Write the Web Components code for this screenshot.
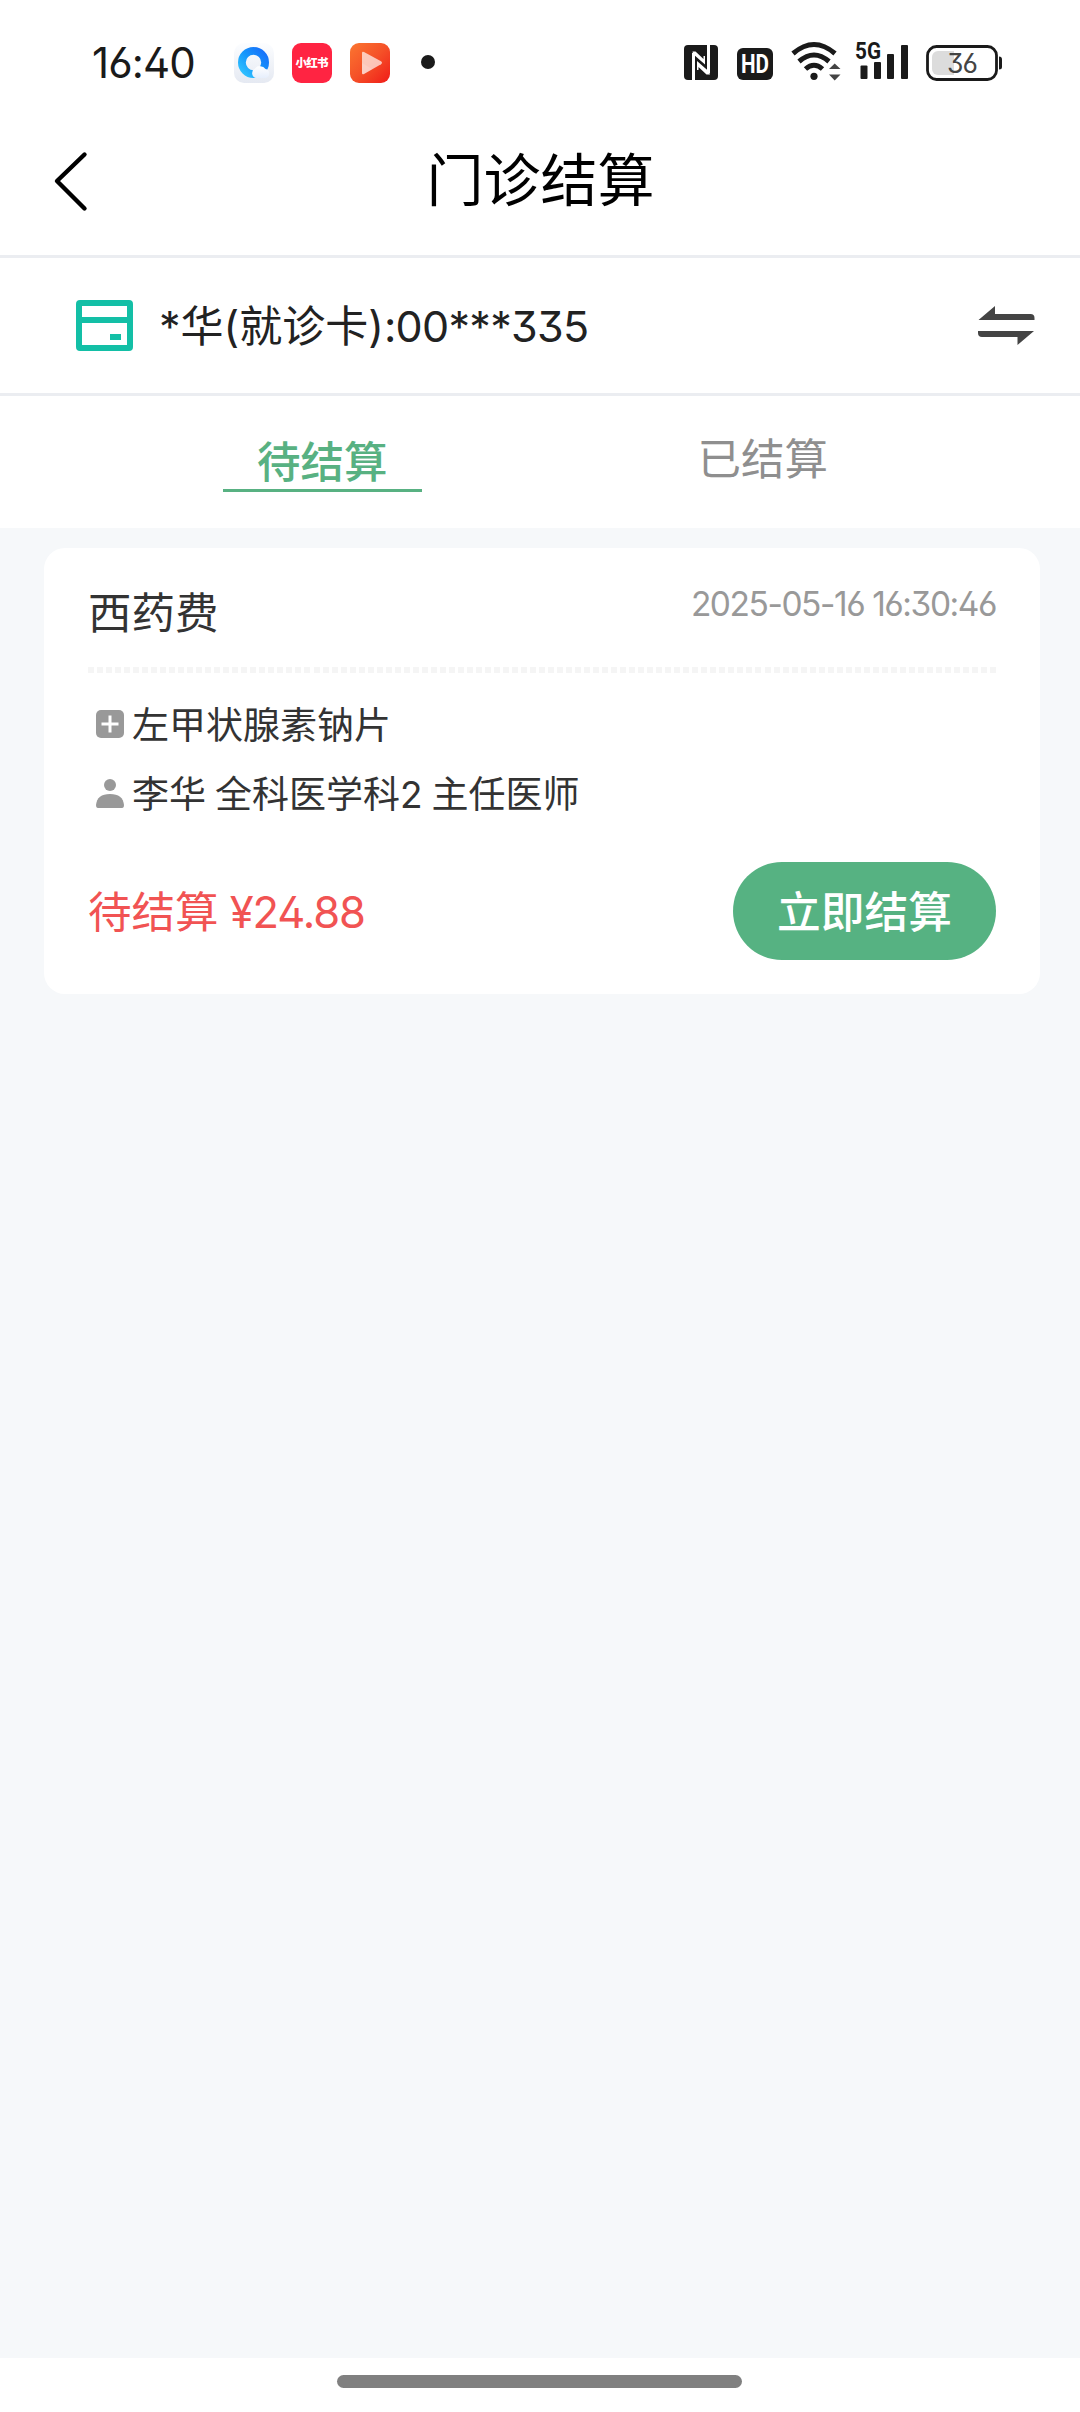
<!DOCTYPE html>
<html lang="zh-CN">
<head>
<meta charset="utf-8">
<title>门诊结算</title>
<style>
  body { margin: 0; background: #fff; font-family: Inter, "Noto Sans CJK SC", sans-serif; font-feature-settings: "ss01"; color: #222; }
</style>
</head>
<body>
<settlement-page></settlement-page>
<script>
const define = (name, html) => {
  const tpl = document.createElement('template');
  tpl.innerHTML = html;
  customElements.define(name, class extends HTMLElement {
    constructor() {
      super();
      this.attachShadow({ mode: 'open' }).append(tpl.content.cloneNode(true));
    }
  });
};

define('status-bar', `
<style>
  :host { display: flex; height: 125px; box-sizing: border-box; padding: 0 54px 0 92px; align-items: center; color: #1a1a1a; }
  svg { display: block; flex: none; }
  .time { font-size: 42px; line-height: 50px; width: 142px; letter-spacing: -.9px; white-space: nowrap; }
  .apps { display: flex; gap: 18px; align-items: center; flex: 1; }
  .sys { display: flex; align-items: center; }
</style>
<div class="time">16:40</div>
<div class="apps">
  <svg width="40" height="40" viewBox="0 0 40 40">
    <defs>
      <linearGradient id="q" x1="0" y1="1" x2="1" y2="0"><stop offset="0" stop-color="#31c3ff"/><stop offset=".5" stop-color="#1597fb"/><stop offset="1" stop-color="#176ffa"/></linearGradient>
      <linearGradient id="b" x1="0" y1="0" x2="0" y2="1"><stop offset="0" stop-color="#fcfdff"/><stop offset="1" stop-color="#e5e9f2"/></linearGradient>
      <linearGradient id="c" x1="0" y1="0" x2="0" y2="1"><stop offset="0" stop-color="#fff"/><stop offset="1" stop-color="#e6eefc"/></linearGradient>
    </defs>
    <rect width="40" height="40" rx="10" fill="url(#b)"/>
    <circle cx="19.5" cy="19.5" r="11.6" fill="none" stroke="url(#q)" stroke-width="7.8"/>
    <path d="M22 35a5 5 0 0 1-1-9.400A6.500 6.500 0 0 1 31.500 26 4.600 4.600 0 0 1 31.500 35z" fill="url(#c)"/>
  </svg>
  <svg width="40" height="40" viewBox="0 0 40 40">
    <rect width="40" height="40" rx="9" fill="#ff2442"/>
    <text x="20" y="24.300" text-anchor="middle" font-size="11.500" font-weight="900" fill="#fff" textLength="33">小红书</text>
  </svg>
  <svg width="40" height="40" viewBox="0 0 40 40">
    <defs><linearGradient id="o" x1="0" y1="0" x2="1" y2="1"><stop offset="0" stop-color="#fb7630"/><stop offset=".5" stop-color="#f55128"/><stop offset="1" stop-color="#f01b18"/></linearGradient></defs>
    <rect width="40" height="40" rx="9" fill="url(#o)"/>
    <path d="M14 9 31 18.300q2 1.500 0 3L14 31q-2 1-2-1V10q0-2 2-1z" fill="#fff" fill-opacity=".68"/>
    <path d="M12 20 22 26 14 31q-2 1-2-1z" fill="#fff" fill-opacity=".15"/>
  </svg>
  <svg width="54" height="40" viewBox="0 0 54 40"><circle cx="20" cy="19" r="7" fill="#1a1a1a"/></svg>
</div>
<div class="sys">
  <svg width="342" height="64" viewBox="0 -10 342 64" fill="#1a1a1a">
    <rect x="0" y="4" width="34" height="35" rx="4"/>
    <path d="M9.500 40V12M24.500 32V3" fill="none" stroke="#fff" stroke-width="3"/>
    <path d="M8.500 10.500H11.500L19.500 18V15H21V23.500L9 13zM26 33.500H22.500L14.500 26V29H13V20L25 30.500z" fill="#fff"/>
    <rect x="53" y="7" width="36" height="32" rx="6"/>
    <text x="71" y="32" text-anchor="middle" font-family="Roboto" font-weight="700" font-size="25" textLength="28" lengthAdjust="spacingAndGlyphs" fill="#fff">HD</text>
    <g fill="none" stroke="#1a1a1a" stroke-width="5">
      <path d="M109 12.500Q130 -5.500 151 12.500"/><path d="M115 20.500Q130 7.500 145 20.500"/><path d="M121.500 28Q130 20.500 138.500 28"/>
    </g>
    <circle cx="130" cy="35.300" r="3.600"/>
    <path d="M145 28 150.700 22.500 156.500 28zM145 33.500H156.500L150.700 39.500z" fill="#444"/>
    <text x="171" y="18.300" font-family="Roboto" font-weight="700" font-size="23" textLength="26" lengthAdjust="spacingAndGlyphs">5G</text>
    <rect x="176.500" y="24.500" width="7" height="13.500" rx="1"/><rect x="190" y="21" width="7" height="17" rx="1"/>
    <rect x="203" y="13" width="7" height="25" rx="1"/><rect x="217" y="4" width="7" height="34" rx="1"/>
    <rect x="243.500" y="5.500" width="69" height="33" rx="9" fill="none" stroke="#1a1a1a" stroke-width="2.800"/>
    <path d="M254 10H270V34H254a6 6 0 0 1-6-6V16a6 6 0 0 1 6-6z" fill="#dcdcdc"/>
    <path d="M315 15.500q3 0 3 3V26q0 2.500-3 2.500z"/>
    <text x="278.500" y="31.500" text-anchor="middle" font-size="26.500" fill="#444" textLength="31">36</text>
  </svg>
</div>`);

define('nav-header', `
<style>
  :host { display: grid; grid-template-columns: 120px 1fr 120px; align-items: center; height: 133px; box-sizing: border-box; border-bottom: 3px solid #ebedf1; color: #000; }
  svg { display: block; margin: -20px 0 0 50px; }
  h1 { margin: -19px 0 0 1px; font-size: 57px; line-height: 70px; font-weight: 400; text-align: center; }
</style>
<svg width="42" height="64" viewBox="0 0 42 64"><path d="M34.500 6.500 7 33 34.500 60.500" fill="none" stroke="#000" stroke-width="4.400" stroke-linecap="round" stroke-linejoin="round"/></svg>
<h1><slot></slot></h1>`);

define('patient-bar', `
<style>
  :host { display: flex; align-items: center; height: 138px; box-sizing: border-box; border-bottom: 3px solid #ebedf1; padding: 0 45px 0 76px; }
  svg { display: block; flex: none; }
  .name { flex: 1; margin-left: 26px; font-size: 43px; line-height: 60px; white-space: nowrap; }
  ::slotted(span) { letter-spacing: -.7px; }
</style>
<svg width="57" height="51" viewBox="0 0 57 51"><rect x="3" y="3" width="51" height="45" rx="1" fill="none" stroke="#13bfa6" stroke-width="6"/><path d="M3 20H54" stroke="#13bfa6" stroke-width="6"/><path d="M34 34H45V40H34z" fill="#13bfa6"/></svg>
<div class="name"><slot></slot></div>
<svg width="57" height="39" viewBox="0 0 57 39" fill="#444"><path d="M.5 14 17 0V8H52.500Q56.500 8 56.500 12V14zM0 25H56L39.500 39V31H4Q0 31 0 27z"/></svg>`);

define('tab-item', `
<style>
  :host { display: flex; flex: 1; justify-content: center; align-items: flex-start; font-size: 43.500px; line-height: 60px; color: #8f8f8f; }
  .label { box-sizing: border-box; width: 199px; height: 96px; text-align: center; padding-top: 33px; }
  :host([active]) { color: #58b182; }
  :host([active]) .label { padding-top: 36px; font-weight: 500; border-bottom: 3px solid #58b182; }
</style>
<div class="label"><slot></slot></div>`);

define('tab-bar', `
<style>
  :host { display: flex; height: 132px; box-sizing: border-box; padding: 0 97px 0 102px; background: #fff; }
</style><slot></slot>`);

define('info-line', `
<style>
  :host { display: flex; align-items: center; height: 69px; padding-left: 8px; gap: 8px; font-size: 37px; line-height: 50px; color: #333; word-spacing: -1.500px; white-space: nowrap; }
  ::slotted(svg) { flex: none; display: block; margin-bottom: 3px; }
</style>
<slot name="icon"></slot><span><slot></slot></span>`);

define('pill-button', `
<style>
  :host { display: block; }
  button { display: block; width: 263px; height: 98px; border: 0; border-radius: 49px; background: #56b282; color: #fff; font: 500 43.700px/60px Inter, "Noto Sans CJK SC", sans-serif; padding: 3px 0 0; text-align: center; }
</style><button><slot></slot></button>`);

define('bill-card', `
<style>
  :host { display: flex; flex-direction: column; box-sizing: border-box; height: 446px; padding: 0 44px; border-radius: 21px; background: #fff; }
  .head { display: flex; justify-content: space-between; height: 119px; color: #333; }
  .title { font-size: 43.500px; line-height: 60px; margin-top: 35px; }
  .date { font-size: 33.500px; line-height: 40px; margin-top: 36px; color: #999; letter-spacing: -1.450px; }
  .rule { height: 6px; background: repeating-linear-gradient(90deg, #f5f5f5 0 6px, transparent 6px 9.020px); }
  .lines { padding-top: 18px; }
  .foot { display: flex; justify-content: space-between; align-items: center; margin-top: 33px; }
  .amount { font-size: 43.500px; line-height: 60px; padding-top: 2px; color: #f15353; white-space: nowrap; }
</style>
<div class="head"><div class="title"><slot name="title"></slot></div><div class="date"><slot name="date"></slot></div></div>
<div class="rule"></div>
<div class="lines"><slot></slot></div>
<div class="foot"><div class="amount"><slot name="amount"></slot></div><slot name="action"></slot></div>`);

define('home-indicator', `
<style>
  :host { display: flex; height: 54px; box-sizing: border-box; padding-top: 17px; padding-right: 1px; justify-content: center; background: #fff; }
  i { width: 405px; height: 13px; border-radius: 7px; background: #808080; }
</style><i></i>`);

define('settlement-page', `
<style>
  :host { display: flex; flex-direction: column; width: 1080px; height: 2412px; overflow: hidden; }
  main { flex: 1; padding: 20px 40px 0 44px; background: #f6f8fa; }
  .num { letter-spacing: -1.100px; }
</style>
<status-bar></status-bar>
<nav-header>门诊结算</nav-header>
<patient-bar>*华(就诊卡)<span>:00***335</span></patient-bar>
<tab-bar><tab-item active>待结算</tab-item><tab-item>已结算</tab-item></tab-bar>
<main>
  <bill-card>
    <span slot="title">西药费</span>
    <span slot="date">2025-05-16 16:30:46</span>
    <info-line><svg slot="icon" width="28" height="28" viewBox="0 0 28 28"><rect width="28" height="28" rx="5" fill="#999"/><path d="M14 5.500V22.500M5.500 14H22.500" stroke="#fff" stroke-width="3"/></svg>左甲状腺素钠片</info-line>
    <info-line><svg slot="icon" width="28" height="29" viewBox="0 0 28 29" fill="#999"><circle cx="14" cy="6" r="6"/><path d="M0 26Q1 15 14 15T28 26Q28 29 26 29H2Q0 29 0 26z"/></svg>李华 全科医学科2 主任医师</info-line>
    <span slot="amount">待结算<span class="num"> ¥24.88</span></span>
    <pill-button slot="action">立即结算</pill-button>
  </bill-card>
</main>
<home-indicator></home-indicator>`);
</script>
</body>
</html>
